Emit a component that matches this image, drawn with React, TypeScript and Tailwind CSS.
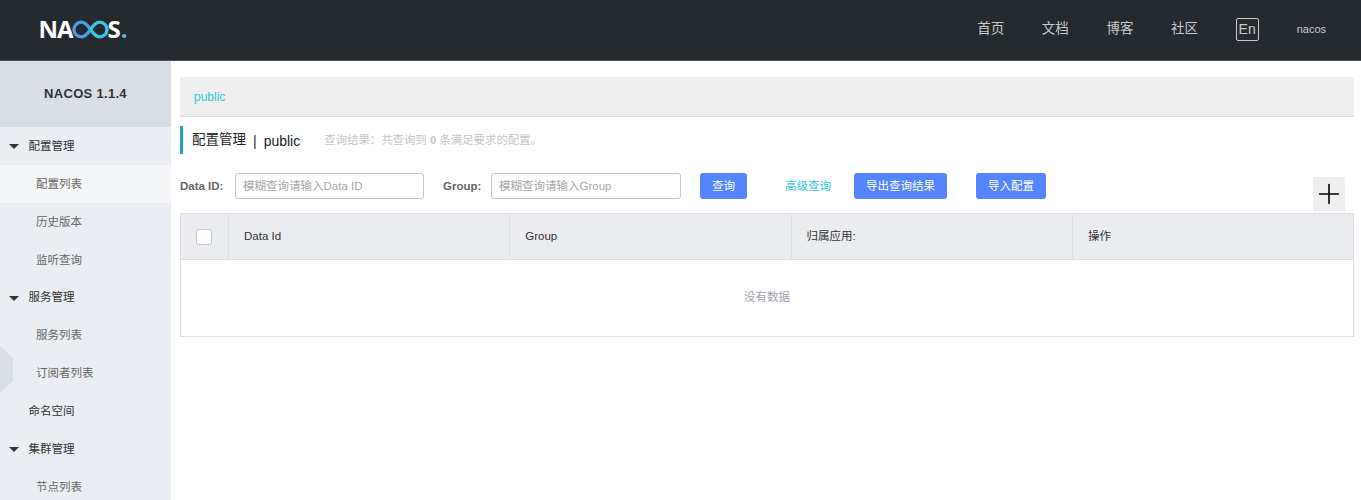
import { Plus } from 'lucide-react'

const font = { fontFamily: '"Liberation Sans", "Noto Sans CJK SC", sans-serif' }

function Logo() {
  return (
    <div className="flex items-center text-[24px] font-bold leading-none text-white" style={{ fontFamily: '"Open Sans", sans-serif' }}>
      <span className="tracking-[-1px]">NA</span>
      <svg width="37" height="19" viewBox="0 0 38 19" className="mx-[-1px]">
        <path
          d="M19 9.500C16 5 13 2 9.500 2A7.500 7.500 0 0 0 9.500 17C13 17 16 14 19 9.500"
          fill="none"
          stroke="#4a9be8"
          strokeWidth="3.400"
        />
        <path
          d="M19 9.500C22 5 25 2 28.500 2A7.500 7.500 0 0 1 28.500 17C25 17 22 14 19 9.500"
          fill="none"
          stroke="#3cc5dd"
          strokeWidth="3.400"
        />
      </svg>
      <span>S</span>
      <span className="text-[#3cc5dd]">.</span>
    </div>
  )
}

function Header() {
  const links = ['首页', '文档', '博客', '社区']
  return (
    <header className="flex h-[61px] items-center justify-between border-b border-[#4a4e52] bg-[#252a2f] pb-[2px] pl-[38.500px] pr-[35px]">
      <Logo />
      <div className="flex items-center text-[#c8c9cb]">
        {links.map((l) => (
          <span key={l} className="mr-[37.600px] text-[13.500px]">{l}</span>
        ))}
        <span className="mr-[38px] flex h-[23px] w-[23px] items-center justify-center rounded-[2px] border border-[#c8c9cb] text-sm">En</span>
        <span className="text-[11px]">nacos</span>
      </div>
    </header>
  )
}

function MenuGroup({ label, arrow = true }: { label: string; arrow?: boolean }) {
  return (
    <div className="flex h-[37.900px] items-center pl-[9px] text-[11.500px] text-[#333]">
      <span className="w-[19.500px]">
        {arrow && <span className="block h-0 w-0 border-x-[5px] border-t-[5px] border-x-transparent border-t-[#333]" />}
      </span>
      {label}
    </div>
  )
}

function MenuItem({ label, active }: { label: string; active?: boolean }) {
  return (
    <div className={`flex h-[37.900px] items-center pl-[36px] text-[11.500px] text-[#666] ${active ? 'bg-[#f4f5f7]' : ''}`}>
      {label}
    </div>
  )
}

function Sidebar() {
  return (
    <aside className="relative h-[439px] w-[171px] shrink-0 overflow-hidden bg-[#eaedf1]">
      <div className="flex h-[66px] items-center justify-center bg-[#d9dee4] text-[13px] font-bold tracking-[0.3px] text-[#333]">
        NACOS 1.1.4
      </div>
      <div className="pt-[0.600px]">
        <MenuGroup label="配置管理" />
        <MenuItem label="配置列表" active />
        <MenuItem label="历史版本" />
        <MenuItem label="监听查询" />
        <MenuGroup label="服务管理" />
        <MenuItem label="服务列表" />
        <MenuItem label="订阅者列表" />
        <MenuGroup label="命名空间" arrow={false} />
        <MenuGroup label="集群管理" />
        <MenuItem label="节点列表" />
      </div>
      <div className="absolute left-0 top-[285px] h-[47px] w-[13px] bg-[#d9dee4] [clip-path:polygon(0_0,100%_26%,100%_74%,0_100%)]" />
    </aside>
  )
}

function Btn({ label, w }: { label: string; w: string }) {
  return (
    <button className={`h-[26px] rounded-[3px] bg-[#5584ff] pt-[1px] text-[11.500px] text-white ${w}`}>{label}</button>
  )
}

function Filters() {
  return (
    <div className="mt-[19px] flex h-[26px] items-center text-[11.500px]">
      <label className="w-[55px] pt-[1px] font-bold text-[#666]">Data ID:</label>
      <input
        placeholder="模糊查询请输入Data ID"
        className="h-[26px] w-[189px] rounded-[3px] border border-[#c4c6cf] px-[7px] text-[11.500px] placeholder:text-[#a8a8a8]"
      />
      <label className="ml-[19px] w-[48px] pt-[1px] font-bold text-[#666]">Group:</label>
      <input
        placeholder="模糊查询请输入Group"
        className="h-[26px] w-[190px] rounded-[3px] border border-[#c4c6cf] px-[7px] text-[11.500px] placeholder:text-[#a8a8a8]"
      />
      <div className="ml-[19px]"><Btn label="查询" w="w-[47px]" /></div>
      <span className="ml-[38px] w-[69px] pt-[1px] text-[#2ec8d8]">高级查询</span>
      <Btn label="导出查询结果" w="w-[93px]" />
      <div className="ml-[29px]"><Btn label="导入配置" w="w-[70px]" /></div>
    </div>
  )
}

function DataTable() {
  const cols = ['Data Id', 'Group', '归属应用:', '操作']
  return (
    <div className="mt-[14px] border border-[#dcdee3]">
      <div className="grid h-[45px] grid-cols-[48px_281.300px_281.300px_281.300px_1fr] bg-[#ebecf0] text-[11.500px] text-[#333]">
        <div className="flex items-center border-r border-[#dfe0e5] pl-[15px]">
          <span className="h-[16px] w-[16px] rounded-[3px] border border-[#c4c6cf] bg-white" />
        </div>
        {cols.map((c, i) => (
          <div key={c} className={`flex items-center pl-[15px] ${i < 3 ? 'border-r border-[#dfe0e5]' : ''}`}>{c}</div>
        ))}
      </div>
      <div className="flex h-[77px] items-center justify-center border-t border-[#dcdee3] text-[11.500px] text-[#a0a2ad]">
        没有数据
      </div>
    </div>
  )
}

export default function App() {
  return (
    <div className="h-[500px] w-[1361px] overflow-hidden bg-white" style={font}>
      <Header />
      <div className="flex">
        <Sidebar />
        <main className="relative ml-[9px] w-[1174px] pt-[16px]">
          <div className="flex h-[40px] items-center border-b border-[#dcdee3] bg-[#eeeeee] pl-[14px] pt-[1px] text-xs text-[#2ec8d8]">
            public
          </div>
          <div className="mt-[9px] flex h-[28px] items-center border-l-[3px] border-[#1f9fc9] pl-[9px] pt-[1px]">
            <span className="text-[13.500px] text-[#222]">配置管理</span>
            <span className="ml-[7px] text-sm text-[#222]">|</span>
            <span className="ml-[7px] text-sm text-[#222]">public</span>
            <span className="ml-[24px] pt-[1px] text-[11.400px] text-[#c5c5c5]">
              查询结果：共查询到 <b>0</b> 条满足要求的配置。
            </span>
          </div>
          <Filters />
          <DataTable />
          <button className="absolute right-[9px] top-[116px] flex h-[34px] w-[32px] items-center justify-center bg-[#eeeeee] text-black">
            <Plus size={34} strokeWidth={1.7} absoluteStrokeWidth />
          </button>
        </main>
      </div>
    </div>
  )
}
